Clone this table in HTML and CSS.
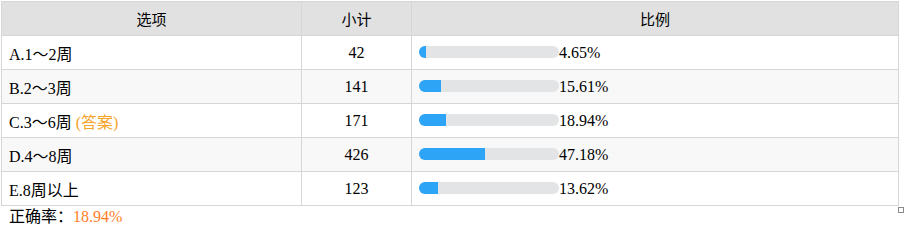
FILE: index.html
```html
<!DOCTYPE html>
<html lang="zh">
<head>
<meta charset="utf-8">
<link rel="stylesheet" href="styles.css">
</head>
<body>
<div class="wrap">
  <table class="stat">
    <thead>
      <tr><th class="c1">选项</th><th class="c2">小计</th><th class="c3">比例</th></tr>
    </thead>
    <tbody>
      <tr><td>A.1～2周</td><td class="num">42</td><td><span class="bar"><span class="fill" style="width:4.65%"></span></span><span class="pct">4.65%</span></td></tr>
      <tr class="alt"><td>B.2～3周</td><td class="num">141</td><td><span class="bar"><span class="fill" style="width:15.61%"></span></span><span class="pct">15.61%</span></td></tr>
      <tr><td>C.3～6周 <span class="ans">(答案)</span></td><td class="num">171</td><td><span class="bar"><span class="fill" style="width:18.94%"></span></span><span class="pct">18.94%</span></td></tr>
      <tr class="alt"><td>D.4～8周</td><td class="num">426</td><td><span class="bar"><span class="fill" style="width:47.18%"></span></span><span class="pct">47.18%</span></td></tr>
      <tr><td>E.8周以上</td><td class="num">123</td><td><span class="bar"><span class="fill" style="width:13.62%"></span></span><span class="pct">13.62%</span></td></tr>
    </tbody>
  </table>
  <div class="footer">正确率：<span class="rate">18.94%</span></div>
  <span class="handle"></span>
</div>
</body>
</html>
```
FILE: styles.css
```css
html, body {
  margin: 0;
  padding: 0;
  background: #fff;
}
body {
  font-family: "Liberation Serif", "Noto Sans CJK SC", serif;
  font-size: 16px;
  color: #000;
}
.wrap {
  position: relative;
  padding: 1px 0 0 1px;
  width: 898px;
}
.stat {
  border-collapse: collapse;
  width: 898px;
  table-layout: fixed;
}
.stat th, .stat td {
  border: 1px solid #d6d6d6;
  height: 34px;
  padding: 0 7px;
  box-sizing: border-box;
}
.stat th {
  background: #e1e1e1;
  font-family: "Noto Sans CJK SC", sans-serif;
  font-weight: normal;
  font-size: 15px;
  text-align: center;
  height: 34px;
}
.c1 { width: 300px; }
.c2 { width: 110px; }
.stat tr.alt td { background: #f8f8f8; }
.num { text-align: center; }
.ans { color: #f5a42a; }
.bar {
  display: inline-block;
  vertical-align: middle;
  width: 140px;
  height: 12px;
  border-radius: 6px;
  background: #e3e4e6;
  overflow: hidden;
  margin-top: -2px;
}
.fill {
  display: block;
  height: 100%;
  background: #2ea4f6;
}
.pct { vertical-align: middle; }
.footer {
  padding: 0 8px;
  line-height: 20px;
  margin-top: 1px;
}
.rate { color: #ff7d1f; }
.handle {
  position: absolute;
  left: 898px;
  top: 207px;
  width: 4px;
  height: 4px;
  border: 1px solid #8a8a8a;
  background: #fff;
}
```
